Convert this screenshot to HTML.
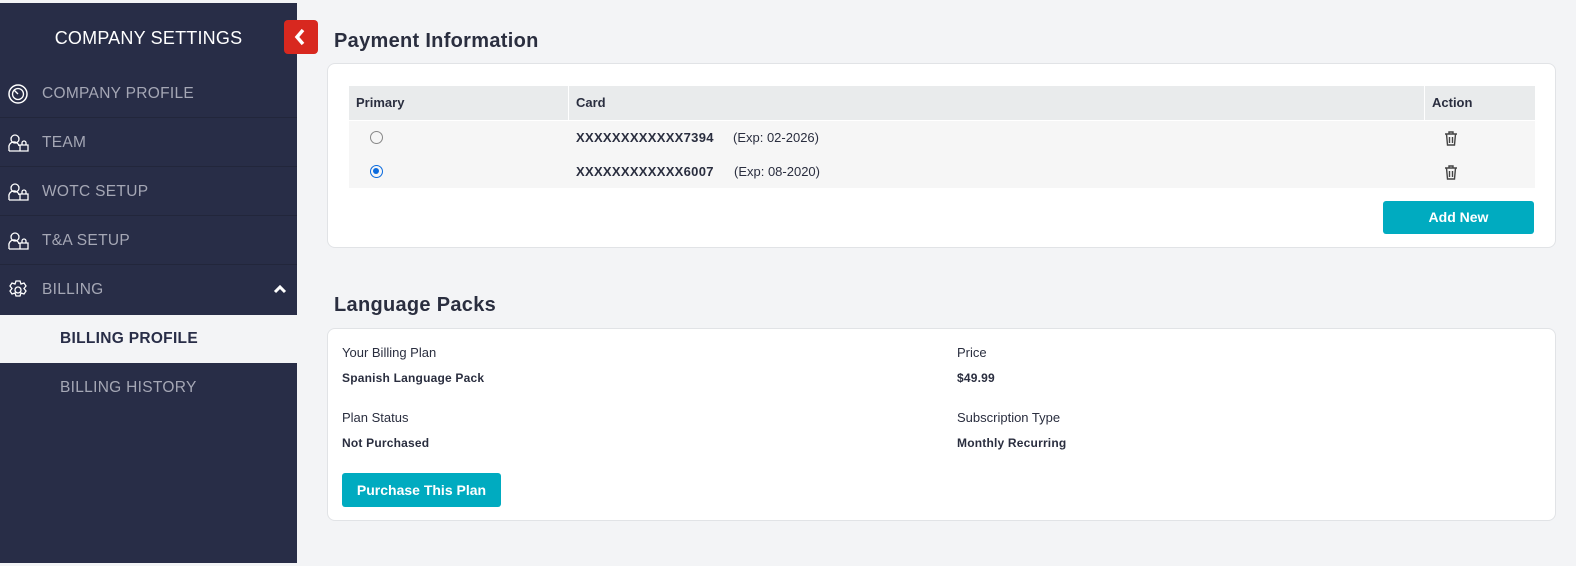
<!DOCTYPE html>
<html><head><style>
*{margin:0;padding:0;box-sizing:border-box}
body{width:1576px;height:566px;background:#f3f4f6;font-family:"Liberation Sans",sans-serif;position:relative;overflow:hidden;color:#2a2e3f}
.sb{position:absolute;left:0;top:3px;width:297px;height:560px;background:#282d47}
.t{position:absolute;left:0;width:297px;text-align:center;top:25px;color:#fff;font-size:18px;letter-spacing:0.2px}
.it{position:absolute;left:0;width:297px;height:49px;border-bottom:1px solid #22263b;color:#a5a7b5;font-size:15.5px;line-height:49px;padding-left:42px;letter-spacing:0.3px}
.it svg{position:absolute;left:8px;top:15px}
.ab{position:absolute;left:0;top:312px;width:297px;height:48px;background:#f3f4f6;color:#282d47;font-weight:bold;font-size:15.5px;line-height:48px;padding-left:60px;letter-spacing:0.3px}
.h{position:absolute;left:334px;font-size:20px;font-weight:bold;color:#2a2e3f;letter-spacing:0.3px}
.card{position:absolute;left:327px;width:1229px;background:#fff;border:1px solid #e1e3e6;border-radius:8px}
.th{position:absolute;top:22px;height:34px;background:#e9ebec;font-size:13px;font-weight:bold;line-height:34px;padding-left:7px}
.row{position:absolute;left:21px;width:1186px;height:34px;background:#f6f6f6;font-size:13px;line-height:34px}
.btn{position:absolute;background:#00abc0;color:#fff;font-weight:bold;font-size:14px;text-align:center;border-radius:3px}
.l{position:absolute;font-size:13px}
.b{position:absolute;font-size:12px;font-weight:bold;letter-spacing:0.2px}
.tr{position:absolute;left:1094px;top:9px}
</style></head><body>
<div class="sb">
<div class="t">COMPANY SETTINGS</div>
<div class="it" style="top:66px">COMPANY PROFILE<svg width="20" height="20"><circle cx="10" cy="10" r="9" fill="none" stroke="#fff" stroke-width="1.5"/><circle cx="10" cy="10" r="5.5" fill="none" stroke="#fff" stroke-width="1.3"/><path d="M6 6l4 4" stroke="#fff" stroke-width="1.3"/></svg></div>
<div class="it" style="top:115px">TEAM<svg width="22" height="20"><circle cx="7" cy="6" r="4" fill="none" stroke="#fff" stroke-width="1.3"/><path d="M1 18v-3a5 5 0 0 1 10-2M1 18h19v-6h-8v6" fill="none" stroke="#fff" stroke-width="1.3"/><path d="M14 12v-2a2 2 0 0 1 4 0v2" fill="none" stroke="#fff" stroke-width="1.3"/></svg></div>
<div class="it" style="top:164px">WOTC SETUP<svg width="22" height="20"><circle cx="7" cy="6" r="4" fill="none" stroke="#fff" stroke-width="1.3"/><path d="M1 18v-3a5 5 0 0 1 10-2M1 18h19v-6h-8v6" fill="none" stroke="#fff" stroke-width="1.3"/><path d="M14 12v-2a2 2 0 0 1 4 0v2" fill="none" stroke="#fff" stroke-width="1.3"/></svg></div>
<div class="it" style="top:213px">T&amp;A SETUP<svg width="22" height="20"><circle cx="7" cy="6" r="4" fill="none" stroke="#fff" stroke-width="1.3"/><path d="M1 18v-3a5 5 0 0 1 10-2M1 18h19v-6h-8v6" fill="none" stroke="#fff" stroke-width="1.3"/><path d="M14 12v-2a2 2 0 0 1 4 0v2" fill="none" stroke="#fff" stroke-width="1.3"/></svg></div>
<div class="it" style="top:262px;border:none">BILLING<svg width="20" height="20"><circle cx="10" cy="10" r="3" fill="none" stroke="#fff" stroke-width="1.3"/><path d="M8 1h4l1 3 3-1 2 3-2 2.5 2 2.5-2 3-3-1-1 3h-4l-1-3-3 1-2-3 2-2.5-2-2.5 2-3 3 1z" fill="none" stroke="#fff" stroke-width="1.3"/></svg><svg style="left:273px;top:19px" width="14" height="10"><path d="M2 8l5-5 5 5" fill="none" stroke="#fff" stroke-width="3"/></svg></div>
<div class="ab">BILLING PROFILE</div>
<div class="it" style="top:360px;padding-left:60px;border:none">BILLING HISTORY</div>
</div>
<div style="position:absolute;left:284px;top:20px;width:34px;height:34px;background:#d8281f;border-radius:4px"><svg width="34" height="34"><path d="M19 10l-6 7 6 7" fill="none" stroke="#fff" stroke-width="3.5"/></svg></div>
<div class="h" style="top:30px">Payment Information</div>
<div class="card" style="top:63px;height:185px">
<div class="th" style="left:21px;width:219px">Primary</div>
<div class="th" style="left:241px;width:855px">Card</div>
<div class="th" style="left:1097px;width:110px">Action</div>
<div class="row" style="top:57px"><span style="position:absolute;left:21px;top:10px;width:13px;height:13px;border:1.5px solid #888;border-radius:50%"></span><b style="position:absolute;left:227px;letter-spacing:0.3px">XXXXXXXXXXXX7394</b><span style="position:absolute;left:384px">(Exp: 02-2026)</span><svg class="tr" width="16" height="17"><path d="M2 4h12M6 4V2h4v2M3.5 4l1 11h7l1-11M6.5 7v6M9.5 7v6" fill="none" stroke="#444" stroke-width="1.4"/></svg></div>
<div class="row" style="top:91px;height:33px"><span style="position:absolute;left:21px;top:10px;width:13px;height:13px;border:1.5px solid #0b6bde;border-radius:50%"><span style="position:absolute;left:2px;top:2px;width:6px;height:6px;background:#0b6bde;border-radius:50%"></span></span><b style="position:absolute;left:227px;letter-spacing:0.3px">XXXXXXXXXXXX6007</b><span style="position:absolute;left:385px">(Exp: 08-2020)</span><svg class="tr" width="16" height="17"><path d="M2 4h12M6 4V2h4v2M3.5 4l1 11h7l1-11M6.5 7v6M9.5 7v6" fill="none" stroke="#444" stroke-width="1.4"/></svg></div>
<div class="btn" style="left:1055px;top:137px;width:151px;height:33px;line-height:33px">Add New</div>
</div>
<div class="h" style="top:294px">Language Packs</div>
<div class="card" style="top:328px;height:193px">
<div class="l" style="left:14px;top:16px">Your Billing Plan</div>
<div class="b" style="left:14px;top:42px">Spanish Language Pack</div>
<div class="l" style="left:14px;top:81px">Plan Status</div>
<div class="b" style="left:14px;top:107px">Not Purchased</div>
<div class="l" style="left:629px;top:16px">Price</div>
<div class="b" style="left:629px;top:42px">$49.99</div>
<div class="l" style="left:629px;top:81px">Subscription Type</div>
<div class="b" style="left:629px;top:107px">Monthly Recurring</div>
<div class="btn" style="left:14px;top:144px;width:159px;height:34px;line-height:34px">Purchase This Plan</div>
</div>
</body></html>
